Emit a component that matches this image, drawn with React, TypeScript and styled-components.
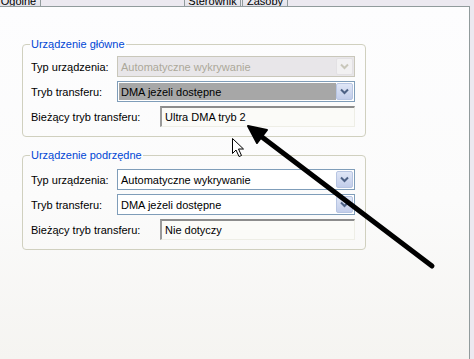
import React from 'react';
import styled, { createGlobalStyle } from 'styled-components';

const GlobalStyle = createGlobalStyle`
  html, body {
    margin: 0;
    padding: 0;
    background: #ece9f0;
  }
  * {
    box-sizing: border-box;
  }
`;

const Window = styled.div`
  position: relative;
  width: 474px;
  height: 359px;
  overflow: hidden;
  display: flex;
  flex-direction: column;
  background: #ece9f0;
  font-family: 'Liberation Sans', Arial, sans-serif;
  font-size: 11px;
  color: #000;
`;

const TabStrip = styled.div`
  height: 6px;
  flex: none;
  display: flex;
  align-items: flex-end;
  overflow: hidden;
`;

const Tab = styled.div<{ $width: number; $offset: number }>`
  flex: none;
  width: ${(p) => p.$width}px;
  margin-left: ${(p) => p.$offset}px;
  height: 20px;
  padding-top: 8px;
  text-align: center;
  line-height: 13px;
  background: linear-gradient(#fcfcfe, #e3e2ea);
  border: 1px solid #919b9c;
  border-bottom: none;
  border-radius: 3px 3px 0 0;
`;

const Panel = styled.div`
  flex: 1;
  margin-right: 4px;
  border-top: 1px solid #919b9c;
  border-right: 1px solid #919b9c;
  background: linear-gradient(#fdfdfe 0%, #fbfbfb 55%, #f5f4f1 100%);
  padding: 31px 0 0 22px;
  display: flex;
  flex-direction: column;
  gap: 12px;
`;

const GroupBox = styled.fieldset<{ $top: number }>`
  width: 344px;
  margin: 0;
  min-width: 0;
  padding: ${(p) => p.$top}px 10px 9px 8px;
  border: 1px solid #d0d0bf;
  border-radius: 4px;
  display: flex;
  flex-direction: column;
  gap: 4px;
`;

const Legend = styled.legend`
  color: #0046d5;
  padding: 0 1px;
  margin-left: -1px;
  line-height: 13px;
`;

const Row = styled.div`
  display: flex;
  align-items: center;
  justify-content: space-between;
  height: 21px;
`;

const Label = styled.span`
  white-space: nowrap;
`;

const Combo = styled.div<{ $width: number; $disabled?: boolean }>`
  width: ${(p) => p.$width}px;
  height: 21px;
  display: flex;
  align-items: stretch;
  padding: 1px;
  border: 1px solid ${(p) => (p.$disabled ? '#c9c7ba' : '#7f9db9')};
  background: ${(p) => (p.$disabled ? '#e8e6e9' : '#ffffff')};
`;

const ComboText = styled.div<{ $disabled?: boolean; $selected?: boolean }>`
  flex: 1;
  display: flex;
  align-items: center;
  padding-left: 2px;
  color: ${(p) => (p.$disabled ? '#aca899' : '#000')};
  background: ${(p) => (p.$selected ? '#a7a7a7' : 'transparent')};
  white-space: nowrap;
`;

const DropButton = styled.div<{ $disabled?: boolean }>`
  width: 17px;
  flex: none;
  display: flex;
  align-items: center;
  justify-content: center;
  border: 1px solid ${(p) => (p.$disabled ? '#e3e1e4' : '#b7c5e2')};
  border-radius: 2px;
  background: ${(p) =>
    p.$disabled ? '#f2f1f2' : 'linear-gradient(#dfe6f6, #c2cdea)'};
`;

const TextBox = styled.div<{ $width: number }>`
  width: ${(p) => p.$width}px;
  height: 21px;
  display: flex;
  align-items: center;
  padding: 0 3px;
  border-top: 2px solid #8c8c8c;
  border-left: 2px solid #9a9a9a;
  border-right: 1px solid #eeeee6;
  border-bottom: 1px solid #eeeee6;
  background: #fbfbf8;
  white-space: nowrap;
`;

const Overlay = styled.svg`
  position: absolute;
  left: 0;
  top: 0;
  pointer-events: none;
`;

const Chevron = ({ disabled }: { disabled?: boolean }) => (
  <svg width="9" height="7" viewBox="0 0 9 7">
    <path
      d="M1 1.5 L4.5 5 L8 1.5"
      fill="none"
      stroke={disabled ? '#c9c7ba' : '#4d6185'}
      strokeWidth="2"
    />
  </svg>
);

type Field =
  | { kind: 'combo'; label: string; value: string; disabled?: boolean; selected?: boolean }
  | { kind: 'text'; label: string; value: string };

const groups: { title: string; top: number; fields: Field[] }[] = [
  {
    title: 'Urządzenie główne',
    top: 5,
    fields: [
      { kind: 'combo', label: 'Typ urządzenia:', value: 'Automatyczne wykrywanie', disabled: true },
      { kind: 'combo', label: 'Tryb transferu:', value: 'DMA jeżeli dostępne', selected: true },
      { kind: 'text', label: 'Bieżący tryb transferu:', value: 'Ultra DMA tryb 2' },
    ],
  },
  {
    title: 'Urządzenie podrzędne',
    top: 7,
    fields: [
      { kind: 'combo', label: 'Typ urządzenia:', value: 'Automatyczne wykrywanie' },
      { kind: 'combo', label: 'Tryb transferu:', value: 'DMA jeżeli dostępne' },
      { kind: 'text', label: 'Bieżący tryb transferu:', value: 'Nie dotyczy' },
    ],
  },
];

const tabs = [
  { label: 'Ogólne', width: 45, offset: -4 },
  { label: 'Sterownik', width: 57, offset: 143 },
  { label: 'Zasoby', width: 46, offset: 1 },
];

const App: React.FC = () => {
  return (
    <Window>
      <GlobalStyle />
      <TabStrip>
        {tabs.map((t) => (
          <Tab key={t.label} $width={t.width} $offset={t.offset}>
            {t.label}
          </Tab>
        ))}
      </TabStrip>
      <Panel>
        {groups.map((g) => (
          <GroupBox key={g.title} $top={g.top}>
            <Legend>{g.title}</Legend>
            {g.fields.map((f) => (
              <Row key={f.label}>
                <Label>{f.label}</Label>
                {f.kind === 'combo' ? (
                  <Combo $width={238} $disabled={f.disabled}>
                    <ComboText $disabled={f.disabled} $selected={f.selected}>
                      {f.value}
                    </ComboText>
                    <DropButton $disabled={f.disabled}>
                      <Chevron disabled={f.disabled} />
                    </DropButton>
                  </Combo>
                ) : (
                  <TextBox $width={195}>{f.value}</TextBox>
                )}
              </Row>
            ))}
          </GroupBox>
        ))}
      </Panel>

      {/* hand-drawn arrow and mouse pointer on top of the dialog */}
      <Overlay width="474" height="359" viewBox="0 0 474 359">
        <line x1="432" y1="266" x2="258" y2="134" stroke="#000" strokeWidth="5" strokeLinecap="round" />
        <polygon points="248,126 257,143 267,130" fill="#000" stroke="#000" strokeWidth="2" strokeLinejoin="round" />
        <path
          d="M232.5 138.5 L232.5 153.5 L236 150 L239 156.5 L241.5 155.5 L238.5 149 L243.5 149 Z"
          fill="#fff"
          stroke="#000"
          strokeWidth="1"
        />
      </Overlay>
    </Window>
  );
};

export default App;
